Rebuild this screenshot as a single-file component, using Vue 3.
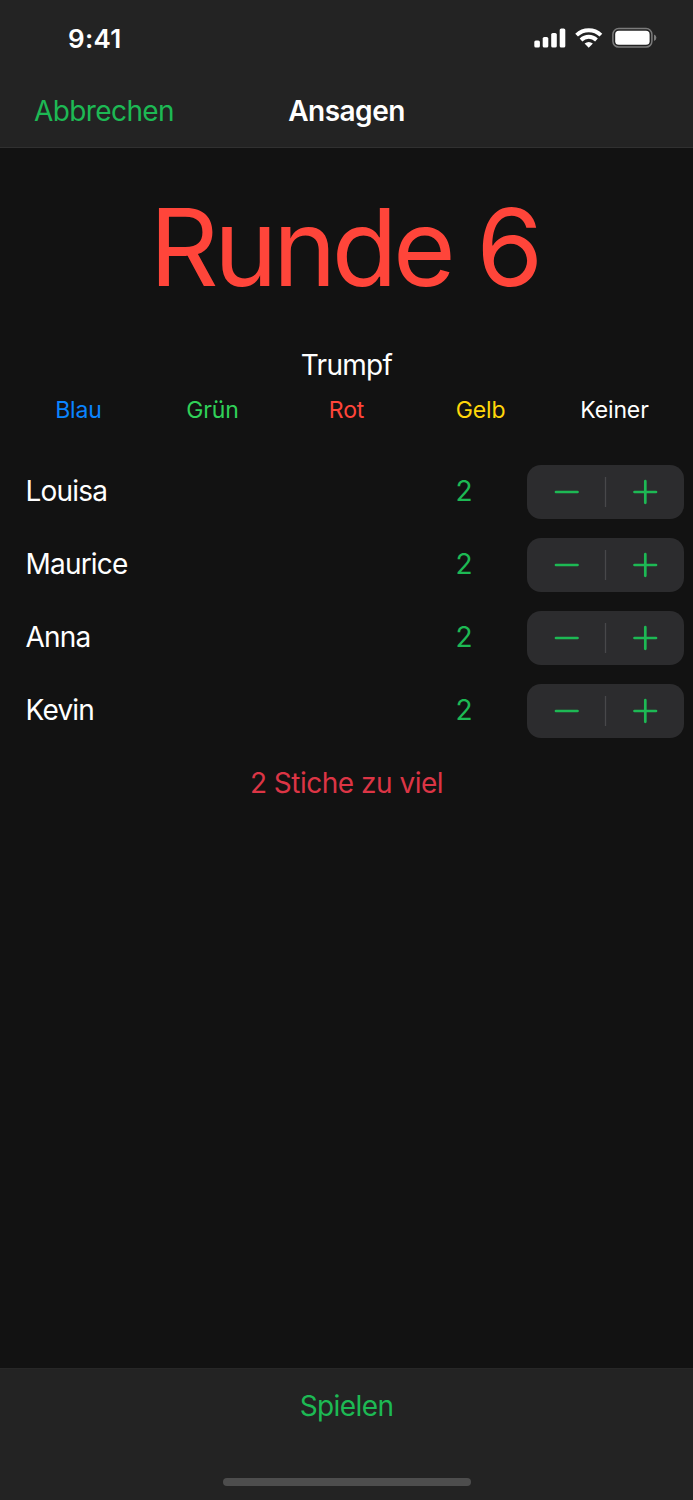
<script setup>
const players = ['Louisa', 'Maurice', 'Anna', 'Kevin']
const trumps = [
  { label: 'Blau', cls: 'blue' },
  { label: 'Grün', cls: 'green' },
  { label: 'Rot', cls: 'red' },
  { label: 'Gelb', cls: 'yellow' },
  { label: 'Keiner', cls: 'white' },
]
</script>

<template>
  <div class="screen">
    <header class="top">
      <div class="status">
        <span class="time">9:41</span>
        <svg class="indicators" width="124" height="24" viewBox="0 0 124 24" fill="#fff">
          <rect x="1.3" y="14.5" width="5.6" height="7" rx="1.6" />
          <rect x="9.7" y="11" width="5.6" height="10.5" rx="1.6" />
          <rect x="18.2" y="6.9" width="5.6" height="14.6" rx="1.6" />
          <rect x="26.7" y="2.4" width="5.6" height="19.1" rx="1.6" />
          <g fill="none" stroke="#fff" stroke-width="4">
            <path d="M43.6 9.1C50.5 2.6 61 2.6 67.9 9.1" />
            <path d="M48 13.9C52.5 9.8 59 9.8 63.5 13.9" />
          </g>
          <path d="M51.6 17.6Q55.7 14.4 59.9 17.6L55.7 21.8Z" />
          <rect x="79.9" y="2.5" width="39" height="18.6" rx="5.8" fill="none" stroke="#7b7b7b" stroke-width="1.5" />
          <rect x="82.2" y="4.8" width="34.4" height="14" rx="3.6" />
          <path d="M121 8.6Q123.4 9.6 123.4 11.8T121 15.1Z" fill="#7b7b7b" />
        </svg>
      </div>
      <nav class="nav">
        <button class="cancel">Abbrechen</button>
        <h1 class="title">Ansagen</h1>
        <span></span>
      </nav>
    </header>
    <main class="content">
      <h2 class="round">Runde 6</h2>
      <div class="label">Trumpf</div>
      <div class="trumps">
        <span v-for="t in trumps" :key="t.label" :class="t.cls">{{ t.label }}</span>
      </div>
      <div class="players">
        <div v-for="p in players" :key="p" class="row">
          <span class="name">{{ p }}</span>
          <span class="count">2</span>
          <div class="stepper">
            <svg width="157" height="54" viewBox="0 0 157 54" fill="none" stroke="#1db954" stroke-width="2.7" stroke-linecap="round">
              <path d="M29 27H50.5M107.5 27H129M118.3 16.2V37.8" />
              <path d="M78.5 12V42" stroke="#48484a" stroke-width="1.3" stroke-linecap="butt" />
            </svg>
          </div>
        </div>
      </div>
      <p class="warning">2 Stiche zu viel</p>
    </main>
    <footer class="bottom">
      <button class="play">Spielen</button>
      <div class="home"></div>
    </footer>
  </div>
</template>

<style>
body { margin: 0; background: #121212; }
</style>
<style scoped>
.screen { width: 693px; height: 1500px; display: flex; flex-direction: column; background: #121212; color: #fff; font-family: Inter, "Liberation Sans", sans-serif; font-size: 28px; letter-spacing: -0.7px; box-sizing: border-box; }
.top { height: 148px; box-sizing: border-box; background: #232323; border-bottom: 1px solid #303030; }
.status { height: 76px; box-sizing: border-box; padding: 0 36px 0 68px; display: flex; justify-content: space-between; align-items: center; }
.time { font-size: 26px; font-weight: 600; letter-spacing: 0.3px; }
.nav { height: 70px; display: grid; grid-template-columns: 1fr auto 1fr; align-items: center; }
button { font: inherit; letter-spacing: inherit; border: 0; padding: 0; margin: 0; background: none; color: #1db954; }
.cancel { justify-self: start; margin-left: 34px; letter-spacing: -0.6px; }
.title { font-size: 28px; font-weight: 600; letter-spacing: -0.5px; margin: 0; }
.content { flex: 1; }
.round { margin: 39px 0 0; height: 120px; line-height: 120px; font-size: 107.5px; font-weight: 400; letter-spacing: -4.7px; text-indent: -5px; text-align: center; color: #ff453a; }
.label { margin-top: 41px; height: 34px; line-height: 34px; text-align: center; }
.trumps { display: grid; grid-template-columns: repeat(5, 134px); justify-content: center; text-align: center; font-size: 23px; letter-spacing: -0.15px; line-height: 28px; margin-top: 14px; }
.blue { color: #0a84ff; }
.green { color: #30d158; }
.red { color: #ff453a; }
.yellow { color: #ffd60a; }
.players { margin-top: 40.8px; display: grid; gap: 19.2px; }
.row { height: 54px; display: grid; grid-template-columns: 429.5px 71.7px 157px; padding-left: 26px; align-items: center; }
.name, .count { margin-bottom: 2px; }
.name { margin-left: -0.5px; letter-spacing: -0.8px; }
.count { color: #1db954; }
.stepper { height: 54px; background: #2c2c2e; border-radius: 14px; }
.stepper svg { display: block; }
.warning { margin: 27.6px 0 0; text-align: center; color: #dc3545; line-height: 34px; letter-spacing: -0.5px; }
.bottom { height: 132px; box-sizing: border-box; border-top: 1px solid #272727; background: #232323; display: flex; flex-direction: column; align-items: center; }
.play { margin-top: 20px; line-height: 34px; letter-spacing: -0.6px; }
.home { width: 248px; height: 8px; border-radius: 4px; background: #4d4d4d; margin-top: 55px; }
</style>
